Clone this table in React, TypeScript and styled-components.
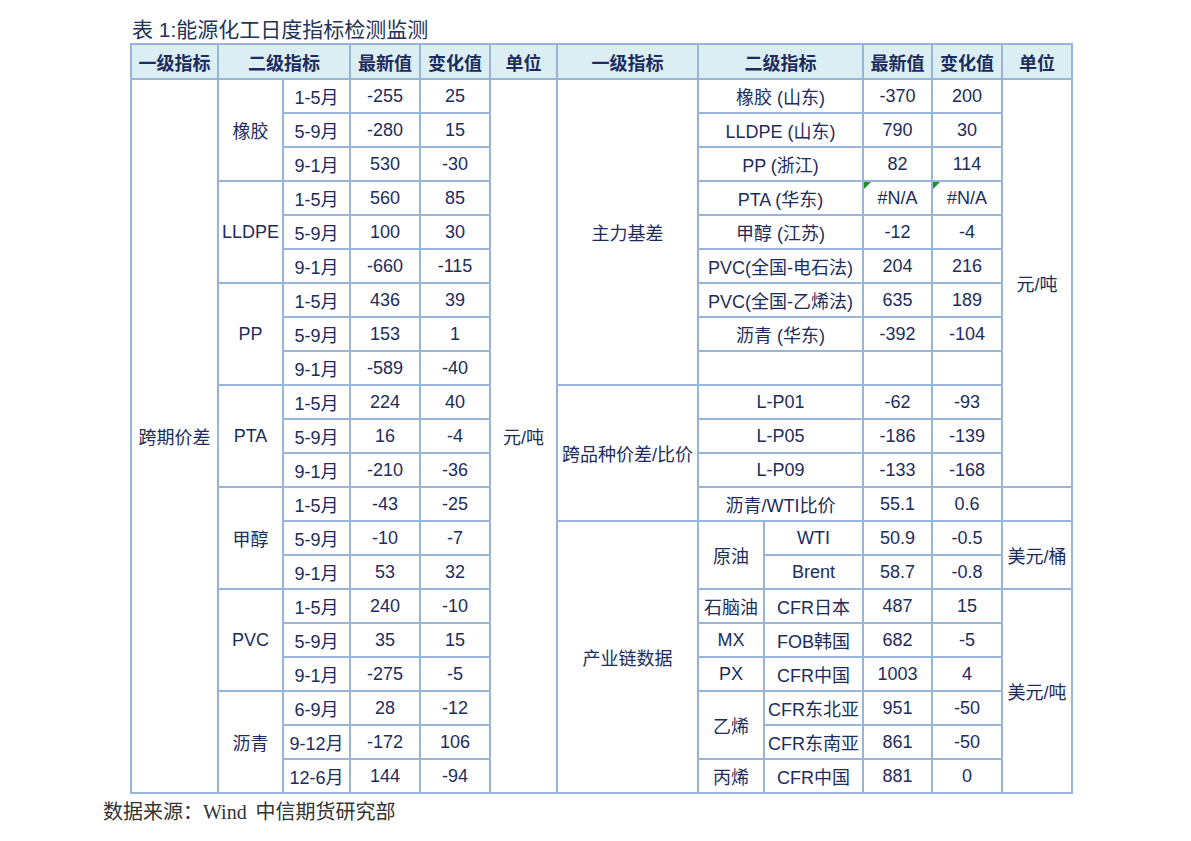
import React from 'react';
import styled, { createGlobalStyle } from 'styled-components';

const Global = createGlobalStyle`
  html, body { margin: 0; padding: 0; background: #ffffff; }
  body { font-family: "Liberation Sans", "Noto Sans CJK SC", sans-serif; }
`;

const Page = styled.div`
  width: 1191px;
  height: 841px;
  box-sizing: border-box;
  padding: 17px 0 0 103px;
  display: flex;
  flex-direction: column;
  align-items: flex-start;
`;

const Title = styled.h1`
  margin: 0 0 1px 29px;
  font: 400 21px/25px "Liberation Sans", "Noto Sans CJK SC", sans-serif;
  color: #22345a;
`;

const Grid = styled.div`
  margin-left: 27px;
  display: grid;
  grid-template-columns: 85px 63px 65px 68px 68px 65px 139px 64px 97px 67px 68px 68px;
  grid-template-rows: 33px repeat(21, 32px);
  gap: 2px;
  padding: 2px;
  background: #98b5d9;
`;

type CellProps = { $c: number; $r: number; $cs?: number; $rs?: number; $head?: boolean };

const Cell = styled.div<CellProps>`
  grid-column: ${(p) => p.$c} / span ${(p) => p.$cs ?? 1};
  grid-row: ${(p) => p.$r} / span ${(p) => p.$rs ?? 1};
  background: ${(p) => (p.$head ? '#dbeef4' : '#ffffff')};
  display: flex;
  align-items: center;
  justify-content: center;
  position: relative;
  font-size: 18px;
  font-weight: ${(p) => (p.$head ? 700 : 400)};
  color: #1d2c5c;
  white-space: nowrap;
`;

const ErrorFlag = styled.span`
  position: absolute;
  top: 0;
  left: 0;
  width: 0;
  height: 0;
  border-top: 7px solid #1b8f2a;
  border-right: 7px solid transparent;
`;

const Footer = styled.p`
  margin: 5px 0 0 0;
  font: 400 20px/24px "Noto Sans CJK SC", sans-serif;
  color: #333333;
`;

const Latin = styled.span`
  font-family: "Liberation Serif", serif;
`;

type C = { c: number; r: number; cs?: number; rs?: number; t?: string; flag?: boolean };

const headers: C[] = [
  { c: 1, r: 1, t: '一级指标' },
  { c: 2, r: 1, cs: 2, t: '二级指标' },
  { c: 4, r: 1, t: '最新值' },
  { c: 5, r: 1, t: '变化值' },
  { c: 6, r: 1, t: '单位' },
  { c: 7, r: 1, t: '一级指标' },
  { c: 8, r: 1, cs: 2, t: '二级指标' },
  { c: 10, r: 1, t: '最新值' },
  { c: 11, r: 1, t: '变化值' },
  { c: 12, r: 1, t: '单位' },
];

const leftGroups: { name: string; rows: [string, string, string][] }[] = [
  { name: '橡胶', rows: [['1-5月', '-255', '25'], ['5-9月', '-280', '15'], ['9-1月', '530', '-30']] },
  { name: 'LLDPE', rows: [['1-5月', '560', '85'], ['5-9月', '100', '30'], ['9-1月', '-660', '-115']] },
  { name: 'PP', rows: [['1-5月', '436', '39'], ['5-9月', '153', '1'], ['9-1月', '-589', '-40']] },
  { name: 'PTA', rows: [['1-5月', '224', '40'], ['5-9月', '16', '-4'], ['9-1月', '-210', '-36']] },
  { name: '甲醇', rows: [['1-5月', '-43', '-25'], ['5-9月', '-10', '-7'], ['9-1月', '53', '32']] },
  { name: 'PVC', rows: [['1-5月', '240', '-10'], ['5-9月', '35', '15'], ['9-1月', '-275', '-5']] },
  { name: '沥青', rows: [['6-9月', '28', '-12'], ['9-12月', '-172', '106'], ['12-6月', '144', '-94']] },
];

const rightTop: [string, string, string][] = [
  ['橡胶 (山东)', '-370', '200'],
  ['LLDPE (山东)', '790', '30'],
  ['PP (浙江)', '82', '114'],
  ['PTA (华东)', '#N/A', '#N/A'],
  ['甲醇 (江苏)', '-12', '-4'],
  ['PVC(全国-电石法)', '204', '216'],
  ['PVC(全国-乙烯法)', '635', '189'],
  ['沥青 (华东)', '-392', '-104'],
  ['', '', ''],
  ['L-P01', '-62', '-93'],
  ['L-P05', '-186', '-139'],
  ['L-P09', '-133', '-168'],
  ['沥青/WTI比价', '55.1', '0.6'],
];

const chain: [string, string, string][] = [
  ['WTI', '50.9', '-0.5'],
  ['Brent', '58.7', '-0.8'],
  ['CFR日本', '487', '15'],
  ['FOB韩国', '682', '-5'],
  ['CFR中国', '1003', '4'],
  ['CFR东北亚', '951', '-50'],
  ['CFR东南亚', '861', '-50'],
  ['CFR中国', '881', '0'],
];

function buildBody(): C[] {
  const cells: C[] = [];
  cells.push({ c: 1, r: 2, rs: 21, t: '跨期价差' });
  cells.push({ c: 6, r: 2, rs: 21, t: '元/吨' });
  leftGroups.forEach((g, gi) => {
    const start = 2 + gi * 3;
    cells.push({ c: 2, r: start, rs: 3, t: g.name });
    g.rows.forEach((row, i) => {
      cells.push({ c: 3, r: start + i, t: row[0] });
      cells.push({ c: 4, r: start + i, t: row[1] });
      cells.push({ c: 5, r: start + i, t: row[2] });
    });
  });

  cells.push({ c: 7, r: 2, rs: 9, t: '主力基差' });
  cells.push({ c: 7, r: 11, rs: 4, t: '跨品种价差/比价' });
  cells.push({ c: 7, r: 15, rs: 8, t: '产业链数据' });
  rightTop.forEach((row, i) => {
    const r = 2 + i;
    const flag = row[1] === '#N/A';
    cells.push({ c: 8, r, cs: 2, t: row[0] });
    cells.push({ c: 10, r, t: row[1], flag });
    cells.push({ c: 11, r, t: row[2], flag });
  });
  cells.push({ c: 12, r: 2, rs: 12, t: '元/吨' });
  cells.push({ c: 12, r: 14, t: '' });

  cells.push({ c: 8, r: 15, rs: 2, t: '原油' });
  cells.push({ c: 8, r: 17, t: '石脑油' });
  cells.push({ c: 8, r: 18, t: 'MX' });
  cells.push({ c: 8, r: 19, t: 'PX' });
  cells.push({ c: 8, r: 20, rs: 2, t: '乙烯' });
  cells.push({ c: 8, r: 22, t: '丙烯' });
  chain.forEach((row, i) => {
    const r = 15 + i;
    cells.push({ c: 9, r, t: row[0] });
    cells.push({ c: 10, r, t: row[1] });
    cells.push({ c: 11, r, t: row[2] });
  });
  cells.push({ c: 12, r: 15, rs: 2, t: '美元/桶' });
  cells.push({ c: 12, r: 17, rs: 6, t: '美元/吨' });
  return cells;
}

const body = buildBody();

export default function App() {
  return (
    <>
      <Global />
      <Page>
        <Title>表 1:能源化工日度指标检测监测</Title>
        <Grid>
          {headers.map((h, i) => (
            <Cell key={`h${i}`} $head $c={h.c} $r={h.r} $cs={h.cs} $rs={h.rs}>
              {h.t}
            </Cell>
          ))}
          {body.map((b, i) => (
            <Cell key={`b${i}`} $c={b.c} $r={b.r} $cs={b.cs} $rs={b.rs}>
              {b.flag && <ErrorFlag />}
              {b.t}
            </Cell>
          ))}
        </Grid>
        <Footer>
          数据来源：<Latin>Wind</Latin>&nbsp;&nbsp;中信期货研究部
        </Footer>
      </Page>
    </>
  );
}
